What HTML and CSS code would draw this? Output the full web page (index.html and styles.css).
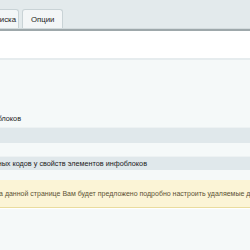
FILE: index.html
```html
<!DOCTYPE html>
<html lang="ru">
<head>
    <meta charset="UTF-8">
    <title>Очистка данных</title>
    <link rel="stylesheet" href="styles.css">
</head>
<body>
    <div class="tabs">
        <div class="tab tab-first">Параметры поиска</div>
        <div class="tab">Опции</div>
    </div>
    <div class="tab-line"></div>
    <div class="content-top"></div>
    <div class="edit-table">
        <div class="row row-tall">
            <div class="label-box box-1">
                <span class="label">Удаление неиспользуемых инфоблоков</span>
            </div>
        </div>
        <div class="heading"></div>
        <div class="row row-gap"></div>
        <div class="heading heading-text">
            <div class="label-box box-2">
                <span class="label">Очистка символьных кодов у свойств элементов инфоблоков</span>
            </div>
        </div>
        <div class="row row-small"></div>
        <div class="notes">
            <span class="notes-text">На данной странице Вам будет предложено подробно настроить удаляемые данные</span>
        </div>
        <div class="row row-rest"></div>
    </div>
</body>
</html>
```

FILE: styles.css
```css
body {
    margin: 0;
    width: 250px;
    height: 250px;
    overflow: hidden;
    background-color: #f5f9f9;
    font-family: "Liberation Sans", Arial, sans-serif;
    font-size: 7px;
    color: #1a1a1a;
}

.tabs {
    display: flex;
    align-items: flex-end;
    height: 28px;
    background-color: #e3eaec;
    gap: 3px;
    white-space: nowrap;
}

.tab {
    height: 19px;
    line-height: 20px;
    padding: 0 8px;
    background-color: #f3f6f7;
    border: 1px solid #c9d3d6;
    border-bottom: none;
    border-radius: 3px 3px 0 0;
    font-size: 7.8px;
    color: #222;
    box-sizing: border-box;
}

.tab-first {
    width: 90px;
    margin-left: -71px;
    padding-right: 2px;
    text-align: right;
}

.tab-line {
    height: 1px;
    background-color: #d3dbdd;
    border-bottom: 2px solid #9ea8ab;
}

.content-top {
    height: 27px;
    background-color: #fff;
    border-bottom: 2px solid #e6ecee;
}

.edit-table {
    display: flex;
    flex-direction: column;
    overflow: hidden;
}

.row {
    display: flex;
    align-items: flex-end;
    white-space: nowrap;
}

.row-tall {
    height: 67px;
    padding-bottom: 4px;
    box-sizing: border-box;
}

.row-gap {
    height: 13px;
}

.row-small {
    height: 10px;
}

.row-rest {
    height: 45px;
    border-top: 1px solid #fff;
}

.label-box {
    display: flex;
    justify-content: flex-end;
    min-width: 0;
    flex-shrink: 0;
    white-space: nowrap;
    font-size: 7.25px;
}

.box-1 {
    width: 21px;
}

.box-2 {
    width: 147px;
}

.heading {
    height: 16px;
    background-color: #e0e8eb;
    border-top: 1px solid #edf2f3;
    box-sizing: border-box;
}

.heading-text {
    height: 14px;
    display: flex;
    align-items: center;
}

.notes {
    height: 28px;
    display: flex;
    align-items: center;
    background-color: #fbf4d6;
    border-bottom: 1px solid #e9dc9e;
    box-sizing: border-box;
    white-space: nowrap;
    color: #5c5234;
}

.notes-text {
    margin-left: -6px;
}
```
